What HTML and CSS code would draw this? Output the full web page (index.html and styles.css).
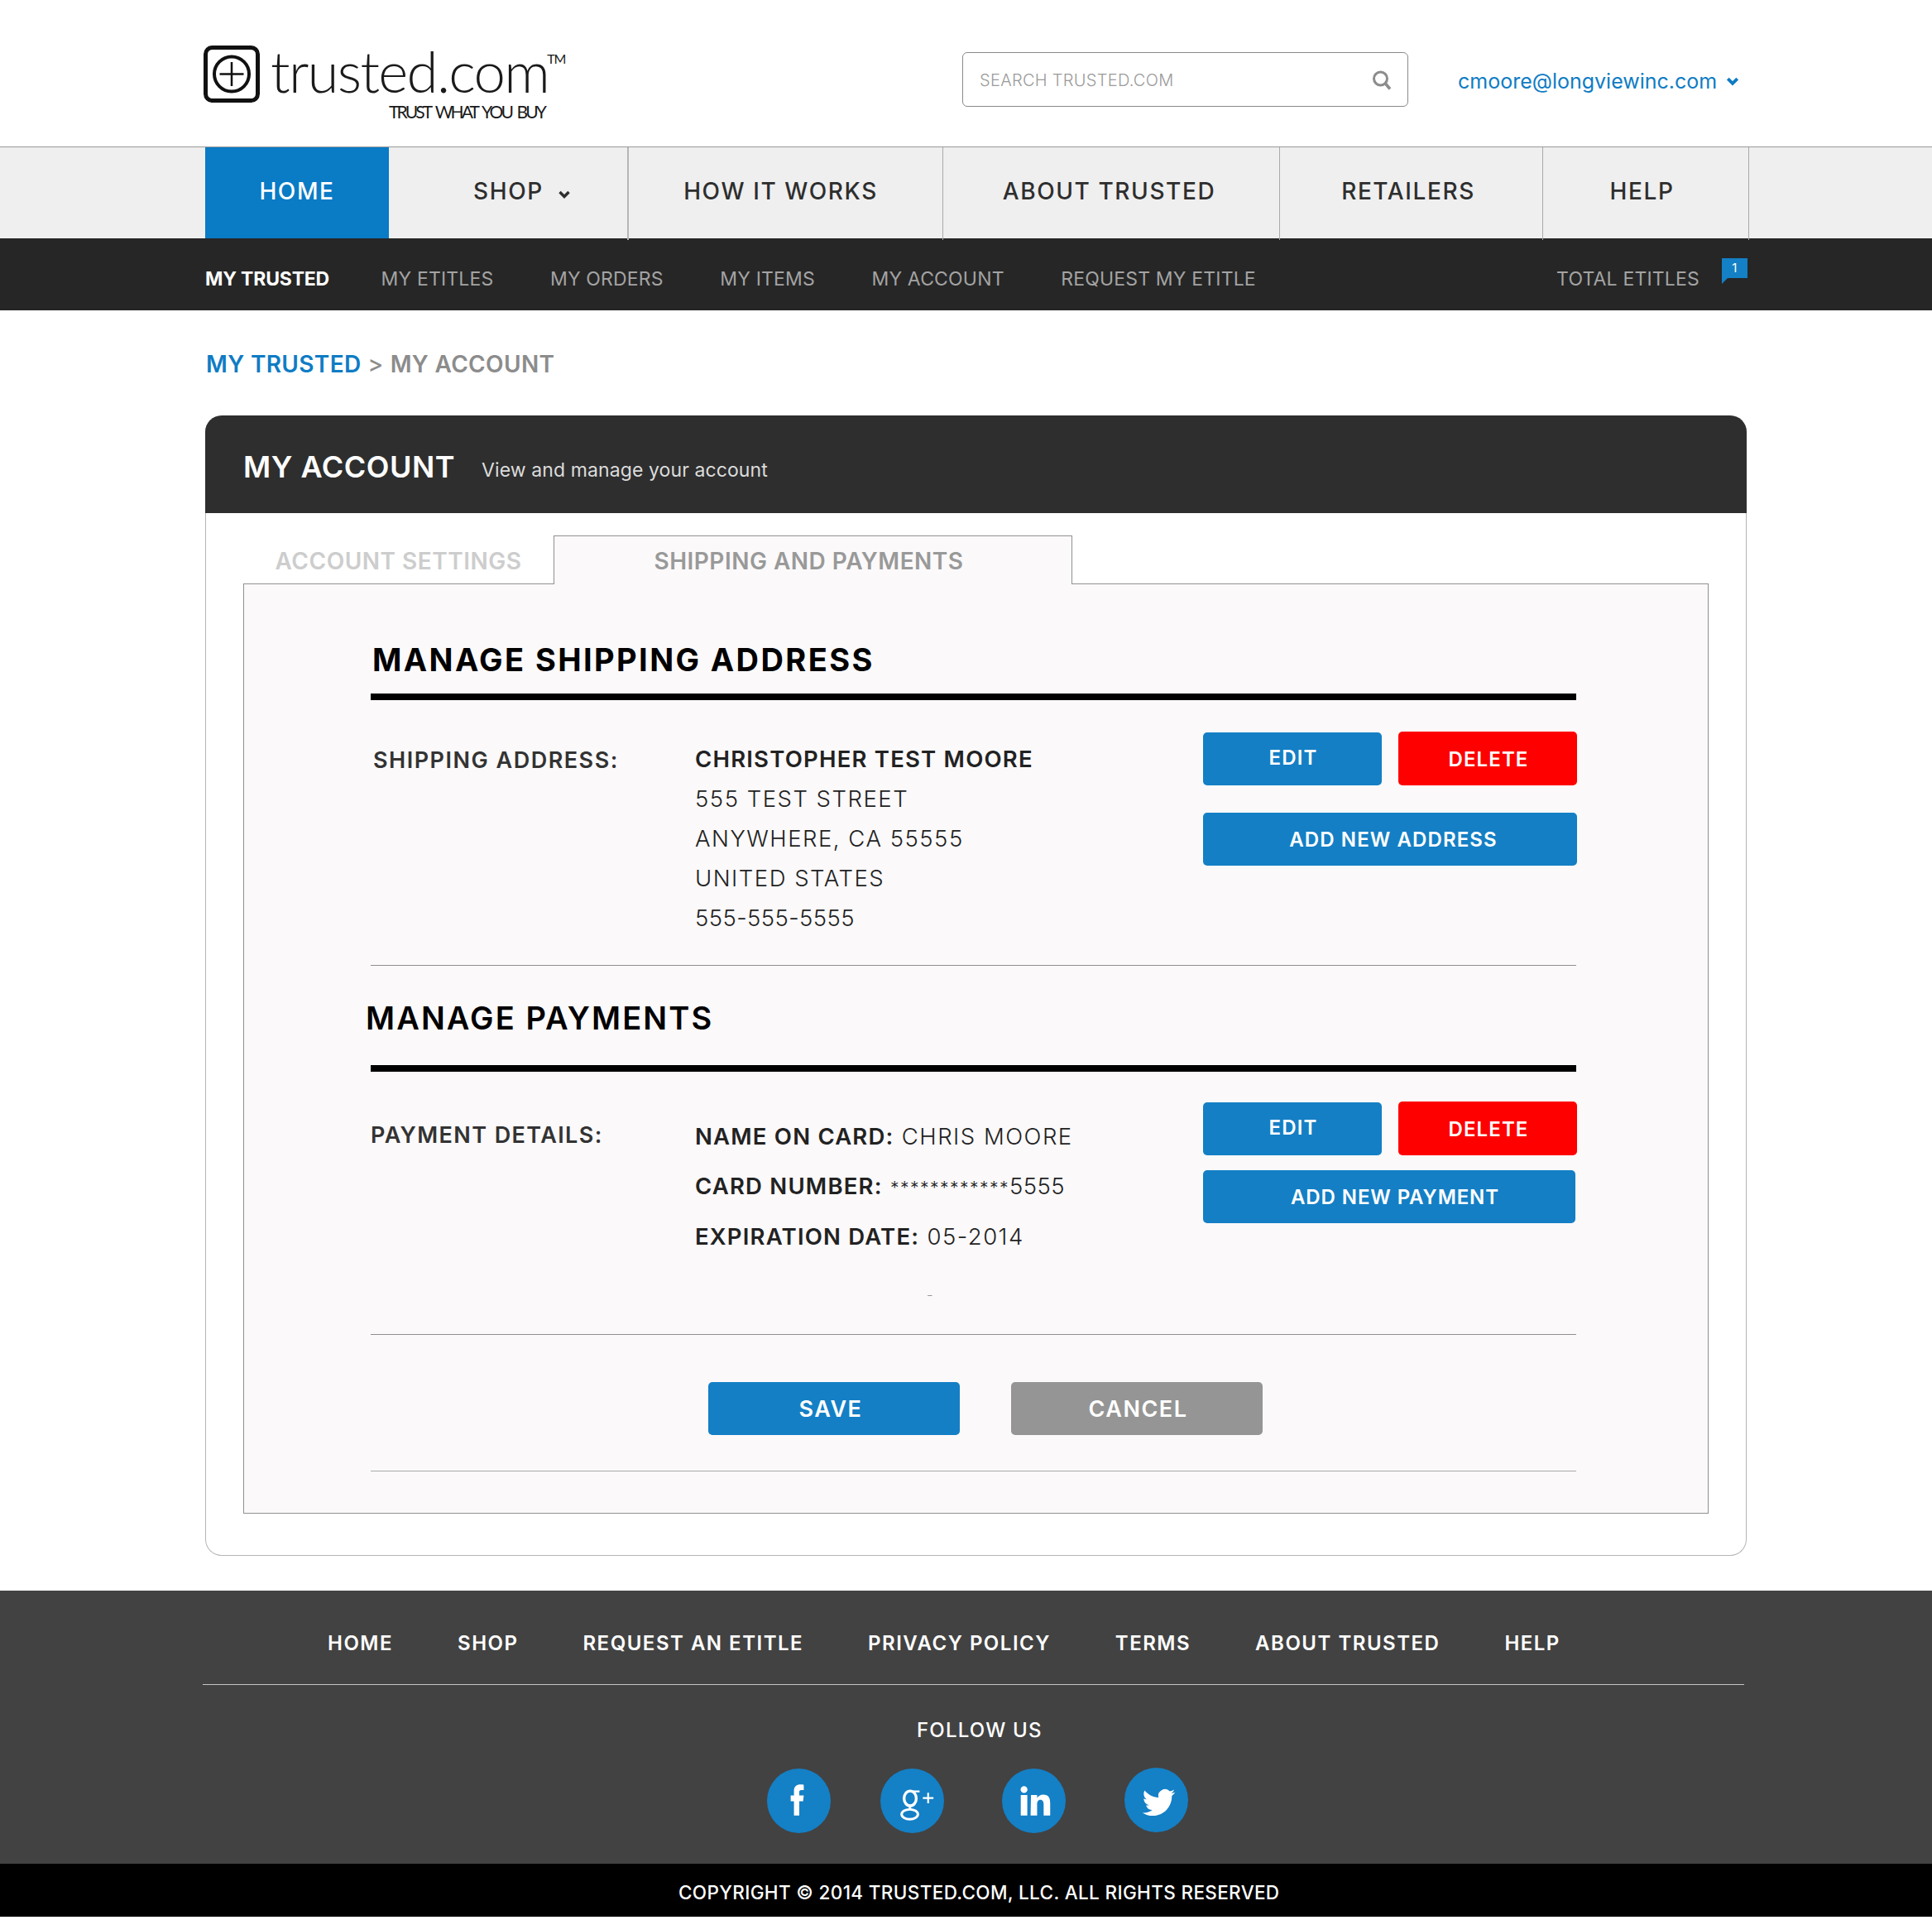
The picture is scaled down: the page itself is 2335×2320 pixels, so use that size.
FILE: index.html
```html
<!DOCTYPE html>
<html lang="en">

<head>
    <meta charset="UTF-8">
    <meta name="viewport" content="width=device-width, initial-scale=1.0">
    <title>My Account - Trusted.com</title>
    <link rel="stylesheet" href="styles.css">
</head>

<body>
    <header class="site-header">
        <a class="logo" href="#">
            <svg class="logo-mark" viewBox="0 0 68 69" aria-hidden="true">
                <rect x="2.5" y="2.5" width="63" height="64" rx="8" fill="none" stroke="#111" stroke-width="5"/>
                <circle cx="34" cy="34.5" r="21" fill="none" stroke="#111" stroke-width="4"/>
                <path d="M34 20v29M19.5 34.5h29" fill="none" stroke="#111" stroke-width="2.5"/>
            </svg>
            <span class="logo-text">
                <span class="logo-top">
                    <span class="logo-name">trusted.com</span>
                    <span class="logo-tm">TM</span>
                </span>
                <span class="logo-tag">TRUST WHAT YOU BUY</span>
            </span>
        </a>
        <div class="search-box">
            <span class="search-label">SEARCH TRUSTED.COM</span>
            <svg class="search-icon" viewBox="0 0 24 24" aria-hidden="true">
                <circle cx="10.5" cy="10.5" r="8" fill="none" stroke="#8c8c8c" stroke-width="3"/>
                <path d="M16 16l6 7" fill="none" stroke="#8c8c8c" stroke-width="3.5"/>
            </svg>
        </div>
        <a class="user-menu" href="#">cmoore@longviewinc.com
            <svg class="user-chevron" viewBox="0 0 14 11" aria-hidden="true"><path d="M2 2.5l5 5 5-5" fill="none" stroke="#0f7cc4" stroke-width="3.4"/></svg>
        </a>
    </header>

    <nav class="main-nav">
        <a class="main-link main-home" href="#">HOME</a>
        <a class="main-link main-shop" href="#">SHOP
            <svg class="shop-chevron" viewBox="0 0 16 12" aria-hidden="true"><path d="M2.5 3l5.5 5.5 5.5-5.5" fill="none" stroke="#2e2e2e" stroke-width="3.4"/></svg>
        </a>
        <a class="main-link main-how" href="#">HOW IT WORKS</a>
        <a class="main-link main-about" href="#">ABOUT TRUSTED</a>
        <a class="main-link main-retailers" href="#">RETAILERS</a>
        <a class="main-link main-help" href="#">HELP</a>
    </nav>

    <nav class="sub-nav">
        <a class="sub-link sub-active" href="#">MY TRUSTED</a>
        <a class="sub-link" href="#">MY ETITLES</a>
        <a class="sub-link" href="#">MY ORDERS</a>
        <a class="sub-link" href="#">MY ITEMS</a>
        <a class="sub-link" href="#">MY ACCOUNT</a>
        <a class="sub-link" href="#">REQUEST MY ETITLE</a>
        <a class="sub-link sub-total" href="#">TOTAL ETITLES<span class="total-badge">1</span></a>
    </nav>

    <div class="breadcrumb">
        <a class="crumb-link" href="#">MY TRUSTED</a>
        <span class="crumb-sep">&gt;</span>
        <span>MY ACCOUNT</span>
    </div>

    <main class="account-card">
        <div class="card-head">
            <h1>MY ACCOUNT</h1>
            <p>View and manage your account</p>
        </div>
        <div class="card-body">
            <div class="tabs">
                <a class="tab" href="#">ACCOUNT SETTINGS</a>
                <a class="tab tab-active" href="#">SHIPPING AND PAYMENTS</a>
            </div>
            <div class="tab-panel">
                <h2 class="section-title">MANAGE SHIPPING ADDRESS</h2>
                <div class="detail-row address-row">
                    <div class="detail-label">SHIPPING ADDRESS:</div>
                    <div class="detail-text">
                        <strong>CHRISTOPHER TEST MOORE</strong><br>
                        555 TEST STREET<br>
                        ANYWHERE, CA 55555<br>
                        UNITED STATES<br>
                        <span class="detail-digits">555-555-5555</span>
                    </div>
                    <div class="detail-actions">
                        <button class="btn btn-small btn-edit">EDIT</button>
                        <button class="btn btn-small btn-delete">DELETE</button>
                        <button class="btn btn-wide">ADD NEW ADDRESS</button>
                    </div>
                </div>

                <h2 class="section-title payments-title">MANAGE PAYMENTS</h2>
                <div class="detail-row payment-row">
                    <div class="detail-label">PAYMENT DETAILS:</div>
                    <div class="detail-text">
                        <strong>NAME ON CARD:</strong> CHRIS MOORE<br>
                        <strong>CARD NUMBER:</strong> <span class="card-stars">************</span><span class="detail-digits">5555</span><br>
                        <strong>EXPIRATION DATE:</strong> 05-2014
                        <div class="stray-dash">–</div>
                    </div>
                    <div class="detail-actions">
                        <button class="btn btn-small btn-edit">EDIT</button>
                        <button class="btn btn-small btn-delete">DELETE</button>
                        <button class="btn btn-wide btn-payment">ADD NEW PAYMENT</button>
                    </div>
                </div>

                <div class="form-actions">
                    <button class="btn btn-form btn-save">SAVE</button>
                    <button class="btn btn-form btn-cancel">CANCEL</button>
                </div>
            </div>
        </div>
    </main>

    <footer class="site-footer">
        <div class="footer-main">
            <nav class="footer-nav">
                <a href="#">HOME</a>
                <a href="#">SHOP</a>
                <a href="#">REQUEST AN ETITLE</a>
                <a href="#">PRIVACY POLICY</a>
                <a href="#">TERMS</a>
                <a href="#">ABOUT TRUSTED</a>
                <a href="#">HELP</a>
            </nav>
            <div class="follow-title">FOLLOW US</div>
            <div class="social-list">
                <a class="social social-fb" href="#" aria-label="Facebook">
                    <svg viewBox="0 0 78 78" aria-hidden="true"><path fill="#fff" d="M33 57V39.500h-4v-7h4v-5.500c0-5.500 3-8 8-8 1.500 0 3.500.2 4 .4v6.500h-3c-2 0-2.500 1-2.500 2.500v4.100h5.500l-.8 7h-4.700V57z"/></svg>
                </a>
                <a class="social" href="#" aria-label="Google Plus">
                    <svg viewBox="0 0 78 78" aria-hidden="true">
                        <g fill="none" stroke="#fff">
                            <ellipse cx="36.500" cy="36" rx="7.500" ry="9" stroke-width="3.400"/>
                            <ellipse cx="36" cy="55.500" rx="10" ry="6" stroke-width="3"/>
                            <path d="M40 44c-4 2-6 3.500-2 5.500M40 27.500h8" stroke-width="2.400"/>
                            <path d="M58.500 29v13M52 35.500h13" stroke-width="2.200"/>
                        </g>
                    </svg>
                </a>
                <a class="social" href="#" aria-label="LinkedIn">
                    <svg viewBox="0 0 78 78" aria-hidden="true"><path fill="#fff" d="M23 32h8v25h-8zM27 21a4.200 4.200 0 1 1 0 8.400 4.200 4.200 0 0 1 0-8.400zM35.500 32H43v3.500c1.500-2.500 4-4.200 7.500-4.200 6.500 0 8.500 4 8.500 10.700V57h-8V43.500c0-3.200-1-5.800-4-5.800s-4 2.600-4 5.800V57h-8z"/></svg>
                </a>
                <a class="social social-raised" href="#" aria-label="Twitter">
                    <svg viewBox="0 0 78 78" aria-hidden="true"><g transform="translate(22 22) scale(1.67)"><path fill="#fff" d="M23.953 4.570a10 10 0 01-2.825.775 4.958 4.958 0 002.163-2.723c-.951.555-2.005.959-3.127 1.184a4.920 4.920 0 00-8.384 4.482C7.690 8.095 4.067 6.130 1.640 3.162a4.822 4.822 0 00-.666 2.475c0 1.710.870 3.213 2.188 4.096a4.904 4.904 0 01-2.228-.616v.060a4.923 4.923 0 003.946 4.827 4.996 4.996 0 01-2.212.085 4.936 4.936 0 004.604 3.417 9.867 9.867 0 01-6.102 2.105c-.390 0-.779-.023-1.170-.067a13.995 13.995 0 007.557 2.209c9.053 0 13.998-7.496 13.998-13.985 0-.210 0-.420-.015-.630A9.935 9.935 0 0024 4.590z"/></g></svg>
                </a>
            </div>
        </div>
        <div class="footer-copy">COPYRIGHT © 2014 TRUSTED.COM, LLC. ALL RIGHTS RESERVED</div>
    </footer>
</body>

</html>
```

FILE: styles.css
```css
body {
    margin: 0;
    font-family: Inter, "Noto Sans", Arial, sans-serif;
    background: #fff;
    color: #2e2e2e;
}

a {
    color: inherit;
    text-decoration: none;
}

/* header */

.site-header {
    height: 177px;
    display: flex;
    align-items: flex-start;
    padding-left: 246px;
    box-sizing: border-box;
}

.logo {
    display: flex;
    margin-top: 55px;
    width: 917px;
    color: #1a1a1a;
}

.logo-mark {
    width: 68px;
    height: 69px;
}

.logo-text {
    display: flex;
    flex-direction: column;
    margin-left: 13px;
    width: 362px;
}

.logo-top {
    display: flex;
    align-items: flex-start;
}

.logo-name {
    font-family: Lato, sans-serif;
    font-weight: 300;
    font-size: 69px;
    line-height: 62px;
    letter-spacing: -1.7px;
}

.logo-tm {
    font-family: Lato, sans-serif;
    font-size: 16px;
    line-height: 16px;
    margin: 8px 0 0 -2px;
    letter-spacing: -1px;
}

.logo-tag {
    font-family: Lato, sans-serif;
    font-size: 21px;
    line-height: 24px;
    margin-left: 143px;
    margin-top: 6px;
    letter-spacing: -2.900px;
    word-spacing: 4px;
    white-space: nowrap;
}

.search-box {
    width: 539px;
    height: 66px;
    margin-top: 63px;
    box-sizing: border-box;
    border: 1px solid #8a8a8a;
    border-radius: 6px;
    display: flex;
    align-items: center;
    justify-content: space-between;
    padding: 2px 19px 0 20px;
}

.search-label {
    font-size: 20px;
    letter-spacing: .3px;
    color: #9a9a9a;
    font-weight: 300;
}

.search-icon {
    width: 24px;
    height: 25px;
    margin-top: -2px;
}

.user-menu {
    margin: 81px 0 0 60px;
    font-size: 25px;
    line-height: 34px;
    color: #0f7cc4;
    white-space: nowrap;
    display: flex;
    align-items: center;
    gap: 11px;
}

.user-chevron {
    width: 16px;
    height: 13px;
}

/* main nav */

.main-nav {
    height: 111px;
    box-sizing: border-box;
    border-top: 1px solid #999;
    background: #efefef;
    padding-left: 248px;
    display: flex;
}

.main-link {
    display: flex;
    align-items: center;
    justify-content: center;
    border-right: 1px solid #aaa;
    height: 112px;
    box-sizing: border-box;
    font-size: 28px;
    font-weight: 500;
    letter-spacing: 1.6px;
    color: #2e2e2e;
    padding-bottom: 7px;
}

.main-home {
    width: 222px;
    height: 110px;
    background: #0a7bc5;
    color: #fff;
    border-right: 0;
    padding-bottom: 5px;
}

.main-shop {
    width: 290px;
    gap: 17px;
    padding-left: 34px;
    border-right: 2px solid #b5b5b5;
}

.main-how {
    width: 380px;
    padding-right: 12px;
}

.main-about {
    width: 407px;
    padding-right: 5px;
}

.main-retailers {
    width: 318px;
    padding-right: 7px;
}

.main-help {
    width: 249px;
    padding-right: 9px;
}

.shop-chevron {
    width: 16px;
    height: 12px;
    margin-top: 9px;
}

/* sub nav */

.sub-nav {
    height: 87px;
    box-sizing: border-box;
    background: #262626;
    padding: 10px 223px 0 248px;
    display: flex;
    align-items: center;
    gap: 68.500px;
    font-size: 23px;
    letter-spacing: .18px;
    color: #a3a3a3;
}

.sub-active {
    color: #fff;
    font-weight: 700;
    margin-right: -6px;
    letter-spacing: -.2px;
}

.sub-total {
    margin-left: auto;
    position: relative;
    padding-right: 58px;
}

.total-badge {
    position: absolute;
    right: 0;
    top: -11px;
    width: 31px;
    height: 24px;
    background: #1480c6;
    color: #fff;
    font-size: 15px;
    line-height: 24px;
    text-align: center;
}

.total-badge::after {
    content: "";
    position: absolute;
    left: 0;
    top: 24px;
    border-top: 7px solid #1480c6;
    border-right: 7px solid transparent;
}

/* breadcrumb */

.breadcrumb {
    padding: 48px 0 45px 249px;
    height: 34px;
    line-height: 34px;
    font-size: 28px;
    font-weight: 600;
    letter-spacing: .35px;
    color: #8c8c8c;
    display: flex;
    gap: 8px;
}

.crumb-link {
    color: #0f7cc4;
}

.crumb-sep {
    font-weight: 500;
}

/* card */

.account-card {
    margin-left: 248px;
    width: 1863px;
    height: 1378px;
    box-sizing: border-box;
    border: 1px solid #b5b5b5;
    border-top: 0;
    border-radius: 20px;
}

.card-head {
    height: 118px;
    box-sizing: border-box;
    margin: 0 -1px;
    background: #2e2e2e;
    border-radius: 20px 20px 0 0;
    display: flex;
    align-items: center;
    padding: 5px 0 0 46px;
    color: #fff;
}

.card-head h1 {
    margin: 0 32px 0 0;
    font-size: 36px;
    font-weight: 600;
    letter-spacing: .5px;
}

.card-head p {
    margin: 9px 0 0;
    font-size: 23px;
    letter-spacing: .1px;
    color: #dcdcdc;
}

.card-body {
    padding: 27px 45px 0;
}

.tabs {
    display: flex;
    height: 59px;
    margin-bottom: -1px;
    position: relative;
    font-size: 28px;
    font-weight: 600;
    letter-spacing: .5px;
}

.tab {
    display: flex;
    align-items: center;
    justify-content: center;
    padding-top: 2px;
    box-sizing: border-box;
    width: 375px;
    color: #cdcdcd;
}

.tab-active {
    width: 627px;
    background: #fbf9fa;
    color: #999;
    border: 1px solid #909090;
    border-bottom: 0;
    padding-right: 10px;
}

.tab-panel {
    height: 1124px;
    box-sizing: border-box;
    border: 1px solid #909090;
    background: #fbf9fa;
    padding: 69px 159px 0 153px;
}

.section-title {
    margin: 0 0 0 2px;
    font-size: 38px;
    line-height: 44px;
    font-weight: 700;
    color: #000;
    letter-spacing: 2.4px;
    white-space: nowrap;
}

.payments-title {
    margin: 41px 0 0 -6px;
    font-weight: 600;
    letter-spacing: 2.100px;
}

.detail-row {
    display: flex;
    box-sizing: border-box;
    color: #333;
    border-top: 8px solid #000;
    border-bottom: 1px solid #8f8f8f;
}

.address-row {
    margin-top: 19px;
    height: 329px;
    padding-top: 47px;
}

.payment-row {
    margin-top: 35px;
    height: 326px;
    padding-top: 47px;
}

.detail-label {
    width: 392px;
    font-size: 27px;
    line-height: 48px;
    font-weight: 600;
    letter-spacing: 1.500px;
    padding: 2px 0 0 3px;
    box-sizing: border-box;
    flex-shrink: 0;
}

.payment-row .detail-label {
    padding-left: 0;
    margin-top: 4px;
    letter-spacing: 1.400px;
}

.detail-text {
    width: 614px;
    flex-shrink: 0;
    font-size: 27.500px;
    line-height: 48px;
    font-weight: 300;
    letter-spacing: 1.500px;
    color: #222;
    white-space: nowrap;
}

.detail-text strong {
    font-weight: 600;
    letter-spacing: 1.200px;
}

.detail-digits {
    letter-spacing: .4px;
}

.payment-row .detail-text {
    line-height: 59.700px;
    margin-top: 2px;
}

.card-stars {
    font-size: 21px;
}

.stray-dash {
    font-size: 11px;
    line-height: 12px;
    margin: 34px 0 0 281px;
    color: #777;
}

.detail-actions {
    display: flex;
    flex-wrap: wrap;
    align-content: flex-start;
    gap: 33px 20px;
    width: 452px;
    flex-shrink: 0;
    margin-top: -8px;
}

.payment-row .detail-actions {
    row-gap: 18px;
    margin-top: -10px;
}

.btn {
    height: 64px;
    border: 0;
    border-radius: 5px;
    background: #147fc5;
    color: #fff;
    font-family: inherit;
    font-size: 24px;
    font-weight: 600;
    letter-spacing: 1.100px;
    cursor: pointer;
    padding: 0;
}

.btn-small {
    width: 216px;
}

.btn-edit {
    padding: 0 0 3px 2px;
}

.btn-delete {
    background: #f00;
    margin-top: -1px;
    height: 65px;
    padding: 2px 0 0 2px;
}

.btn-wide {
    width: 100%;
    padding-left: 8px;
}

.btn-payment {
    width: 450px;
    padding-left: 14px;
    letter-spacing: .9px;
}

.form-actions {
    display: flex;
    gap: 62px;
    height: 165px;
    box-sizing: border-box;
    padding: 57px 0 0 408px;
    border-bottom: 1px solid #aaa;
}

.btn-form {
    width: 304px;
    font-size: 27px;
    letter-spacing: 1.500px;
}

.btn-save {
    padding-right: 8px;
}

.btn-cancel {
    background: #959595;
    padding-left: 3px;
}

/* footer */

.site-footer {
    margin-top: 42px;
    color: #fff;
    margin-bottom: 4px;
}

.footer-main {
    height: 330px;
    background: #424242;
    box-sizing: border-box;
    overflow: hidden;
}

.footer-nav {
    margin: 0 227px 0 245px;
    height: 114px;
    box-sizing: border-box;
    padding: 48px 0 0 151px;
    border-bottom: 1px solid #c4c4c4;
    display: flex;
    gap: 78px;
    font-size: 24px;
    line-height: 32px;
    font-weight: 600;
    letter-spacing: 1.500px;
}

.follow-title {
    margin: 39px 0 0;
    padding-left: 1108px;
    font-size: 24px;
    line-height: 32px;
    font-weight: 500;
    letter-spacing: 1.200px;
}

.social-list {
    display: flex;
    gap: 70px;
    padding-left: 927px;
    margin-top: 30px;
}

.social {
    width: 77px;
    height: 78px;
    border-radius: 50%;
    background: #1480c6;
    display: block;
}

.social svg {
    width: 77px;
    height: 78px;
    display: block;
}

.social-fb {
    margin-right: -10px;
}

.social-raised {
    margin-top: -1px;
    margin-left: 1px;
}

.footer-copy {
    height: 64px;
    box-sizing: border-box;
    padding: 3px 0 0 820px;
    background: #000;
    line-height: 64px;
    font-size: 22.500px;
    font-weight: 500;
    letter-spacing: .35px;
}
```
